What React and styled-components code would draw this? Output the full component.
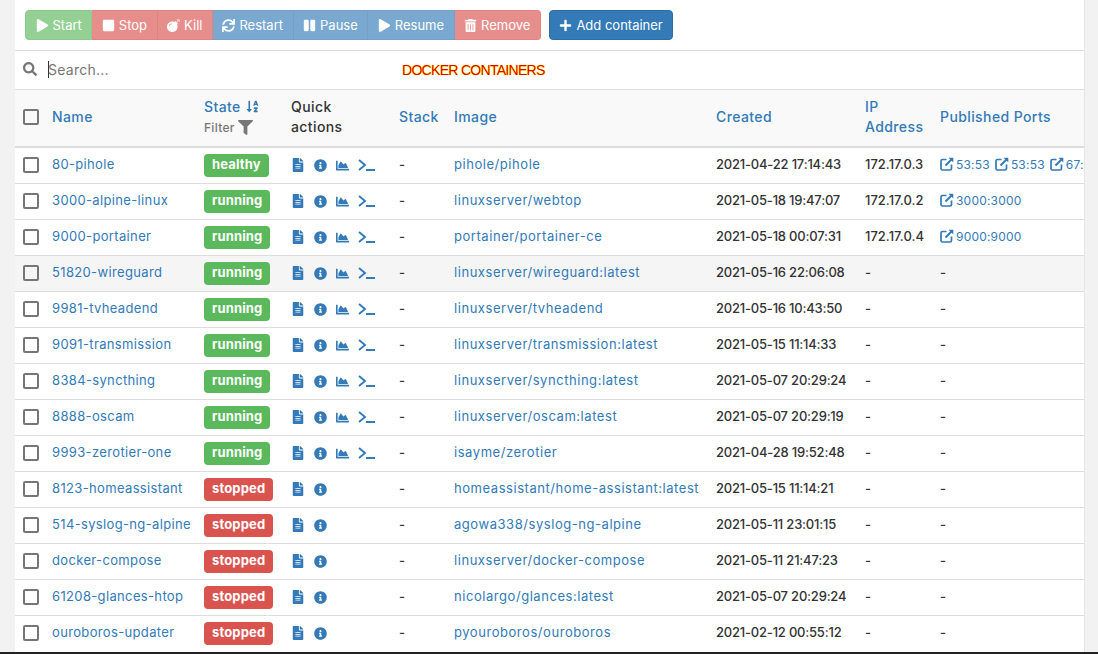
import { createGlobalStyle } from "styled-components";
import styled from "styled-components";
import {
  FaPlay,
  FaStop,
  FaBomb,
  FaSync,
  FaPause,
  FaTrashAlt,
  FaPlus,
  FaSearch,
  FaFilter,
  FaSortAlphaDown,
  FaFileAlt,
  FaInfoCircle,
  FaChartArea,
} from "react-icons/fa";

const GlobalStyle = createGlobalStyle`
  html, body {
    margin: 0;
    height: 654px;
    overflow: hidden;
    background: #f2f2f2;
    font-family: Inter, "Open Sans", sans-serif;
    color: #333;
  }
`;

const Frame = styled.div`
  height: 654px;
  box-sizing: border-box;
  border-bottom: 2px solid #222;
  overflow: hidden;
`;

const Page = styled.div`
  width: 1069px;
  height: 652px;
  margin-left: 15px;
  background: #fff;
  box-shadow: 1px 0 0 #e6e6e6;
  overflow: hidden;
`;

const Toolbar = styled.div`
  display: flex;
  align-items: center;
  gap: 8px;
  height: 50px;
  padding-left: 10px;
  border-bottom: 1px solid #ddd;
`;

const ButtonGroup = styled.div`
  display: flex;
`;

const ActionButton = styled.div`
  display: flex;
  align-items: center;
  gap: 4px;
  height: 30px;
  box-sizing: border-box;
  padding: 0 9.5px;
  font-size: 13px;
  color: #fff;
  white-space: nowrap;
  background: ${(p) => p.$bg};
  border: 1px solid ${(p) => p.$line};
  border-left-width: ${(p) => (p.$first ? 1 : 0)}px;
  border-radius: ${(p) => (p.$first ? "4px 0 0 4px" : p.$last ? "0 4px 4px 0" : "0")};
  opacity: ${(p) => (p.$faded ? 0.65 : 1)};

  svg {
    font-size: 13px;
  }
`;

const AddButton = styled(ActionButton)`
  border-radius: 4px;
  border-left-width: 1px;
`;

const SearchBar = styled.div`
  position: relative;
  display: flex;
  align-items: center;
  height: 39px;
  padding: 0 0 2px 8px;
  box-sizing: border-box;
  border-bottom: 1px solid #ddd;
  color: #767676;
  font-size: 14px;
  letter-spacing: 0.25px;

  svg {
    font-size: 14px;
    margin-right: 11px;
  }
`;

const Caret = styled.span`
  width: 1px;
  height: 17px;
  background: #333;
  margin-right: -1px;
`;

const Banner = styled.span`
  position: absolute;
  left: 387px;
  top: 11px;
  font-family: "Liberation Sans", sans-serif;
  font-size: 14px;
  letter-spacing: -0.7px;
  color: #e00000;
  text-shadow: 0 0 1px #ff0, 0 0 1px #ff0;
`;

const Table = styled.table`
  width: 1069px;
  table-layout: fixed;
  border-collapse: collapse;
  font-size: 13px;
`;

const Th = styled.th`
  height: 57px;
  box-sizing: border-box;
  padding: 0 0 2px ${(p) => p.$pad ?? 8}px;
  text-align: left;
  font-weight: 500;
  font-size: 14px;
  line-height: 20px;
  letter-spacing: 0.4px;
  color: ${(p) => (p.$plain ? "#333" : "#337ab7")};
  background: #f9f9f9;
  border-bottom: 2px solid #ddd;
`;

const FilterLabel = styled.div`
  display: flex;
  align-items: center;
  gap: 3px;
  margin-top: 1px;
  font-size: 12px;
  letter-spacing: 0.3px;
  color: #767676;

  svg {
    font-size: 15px;
  }
`;

const Row = styled.tr`
  height: 36px;
  background: ${(p) => (p.$hover ? "#f5f5f5" : "#fff")};
  border-bottom: 1px solid #ddd;

  &:last-child {
    border-bottom: none;
  }
`;

const Td = styled.td`
  box-sizing: border-box;
  padding: 0 0 ${(p) => (p.$text ? 2 : 0)}px ${(p) => p.$pad ?? 8}px;
  white-space: nowrap;
  overflow: hidden;
  color: ${(p) => (p.$link ? "#337ab7" : "#333")};
  font-weight: ${(p) => (p.$strong ? 500 : 400)};
  letter-spacing: ${(p) => p.$track || 0}px;
`;

const Box = styled.span`
  display: block;
  width: 16px;
  height: 16px;
  box-sizing: border-box;
  border: 2px solid #767676;
  border-radius: 2px;
`;

const Badge = styled.span`
  display: inline-block;
  height: 23px;
  line-height: 21px;
  padding: 0 8px;
  border-radius: 4px;
  color: #fff;
  font-weight: 700;
  font-size: 13px;
  letter-spacing: 0.15px;
  background: ${(p) => (p.$state === "stopped" ? "#d9534f" : "#5cb85c")};
`;

const Actions = styled.div`
  display: flex;
  align-items: center;
  gap: 9px;
  color: #337ab7;
  font-size: 13px;
`;

const FileIcon = styled(FaFileAlt)`
  font-size: 14px;
`;

const Ports = styled.div`
  display: flex;
  gap: 5px;
  font-size: 12px;
  letter-spacing: 0.2px;
  color: #337ab7;
`;

const Port = styled.span`
  display: flex;
  align-items: center;
  gap: 2px;
`;

const Sort = styled(FaSortAlphaDown)`
  font-size: 13px;
  vertical-align: -1px;
  margin-left: 1px;
`;

const containers = [
  ["80-pihole", "healthy", "pihole/pihole", "2021-04-22 17:14:43", "172.17.0.3", ["53:53", "53:53", "67:67"]],
  ["3000-alpine-linux", "running", "linuxserver/webtop", "2021-05-18 19:47:07", "172.17.0.2", ["3000:3000"]],
  ["9000-portainer", "running", "portainer/portainer-ce", "2021-05-18 00:07:31", "172.17.0.4", ["9000:9000"]],
  ["51820-wireguard", "running", "linuxserver/wireguard:latest", "2021-05-16 22:06:08", "-", []],
  ["9981-tvheadend", "running", "linuxserver/tvheadend", "2021-05-16 10:43:50", "-", []],
  ["9091-transmission", "running", "linuxserver/transmission:latest", "2021-05-15 11:14:33", "-", []],
  ["8384-syncthing", "running", "linuxserver/syncthing:latest", "2021-05-07 20:29:24", "-", []],
  ["8888-oscam", "running", "linuxserver/oscam:latest", "2021-05-07 20:29:19", "-", []],
  ["9993-zerotier-one", "running", "isayme/zerotier", "2021-04-28 19:52:48", "-", []],
  ["8123-homeassistant", "stopped", "homeassistant/home-assistant:latest", "2021-05-15 11:14:21", "-", []],
  ["514-syslog-ng-alpine", "stopped", "agowa338/syslog-ng-alpine", "2021-05-11 23:01:15", "-", []],
  ["docker-compose", "stopped", "linuxserver/docker-compose", "2021-05-11 21:47:23", "-", []],
  ["61208-glances-htop", "stopped", "nicolargo/glances:latest", "2021-05-07 20:29:24", "-", []],
  ["ouroboros-updater", "stopped", "pyouroboros/ouroboros", "2021-02-12 00:55:12", "-", []],
];

const buttons = [
  ["Start", FaPlay, "#5cb85c", "#4cae4c"],
  ["Stop", FaStop, "#d9534f", "#d43f3a"],
  ["Kill", FaBomb, "#d9534f", "#d43f3a"],
  ["Restart", FaSync, "#337ab7", "#2e6da4"],
  ["Pause", FaPause, "#337ab7", "#2e6da4"],
  ["Resume", FaPlay, "#337ab7", "#2e6da4"],
  ["Remove", FaTrashAlt, "#d9534f", "#d43f3a"],
];

function TerminalIcon() {
  return (
    <svg width="17" height="12" viewBox="0 0 17 12" fill="none">
      <path d="M1 1 L7 6 L1 11" stroke="#337ab7" strokeWidth="1.9" />
      <rect x="8" y="10" width="9" height="2" fill="#337ab7" />
    </svg>
  );
}

// box with an arrow out of its top right corner
function ExternalLinkIcon() {
  return (
    <svg width="14" height="14" viewBox="0 0 14 14" fill="none" stroke="#337ab7">
      <path d="M6.5 2.5 H2.5 Q1 2.5 1 4 V11.5 Q1 13 2.5 13 H10 Q11.5 13 11.5 11.5 V7.5" strokeWidth="1.7" />
      <path d="M5.5 8.5 L12 2" strokeWidth="2" />
      <path d="M8.5 0.8 H13.3 V5.6 Z" fill="#337ab7" strokeWidth="0" />
    </svg>
  );
}

export default function App() {
  return (
    <Frame>
      <GlobalStyle />
      <Page>
        <Toolbar>
          <ButtonGroup>
            {buttons.map(([label, Icon, bg, line], i) => (
              <ActionButton key={label} $bg={bg} $line={line} $faded $first={i === 0} $last={i === buttons.length - 1}>
                <Icon />
                {label}
              </ActionButton>
            ))}
          </ButtonGroup>
          <AddButton $bg="#337ab7" $line="#2e6da4">
            <FaPlus />
            Add container
          </AddButton>
        </Toolbar>
        <SearchBar>
          <FaSearch />
          <Caret />
          Search...
          <Banner>DOCKER CONTAINERS</Banner>
        </SearchBar>
        <Table>
          <colgroup>
            <col width="36" />
            <col width="153" />
            <col width="79" />
            <col width="108" />
            <col width="55" />
            <col width="262" />
            <col width="149" />
            <col width="75" />
            <col width="152" />
          </colgroup>
          <thead>
            <tr>
              <Th $pad={8}>
                <Box />
              </Th>
              <Th $pad={1}>Name</Th>
              <Th $pad={0}>
                State <Sort />
                <FilterLabel>
                  Filter <FaFilter />
                </FilterLabel>
              </Th>
              <Th $plain>
                Quick
                <br />
                actions
              </Th>
              <Th>Stack</Th>
              <Th>Image</Th>
              <Th>Created</Th>
              <Th>
                IP
                <br />
                Address
              </Th>
              <Th>Published Ports</Th>
            </tr>
          </thead>
          <tbody>
            {containers.map(([name, state, image, created, ip, ports]) => (
              <Row key={name} $hover={name === "51820-wireguard"}>
                <Td $pad={8}>
                  <Box />
                </Td>
                <Td $pad={1} $link $text $track={0.35}>
                  {name}
                </Td>
                <Td $pad={0}>
                  <Badge $state={state}>{state}</Badge>
                </Td>
                <Td>
                  <Actions>
                    <FileIcon />
                    <FaInfoCircle />
                    {state !== "stopped" && <FaChartArea />}
                    {state !== "stopped" && <TerminalIcon />}
                  </Actions>
                </Td>
                <Td $strong $text>
                  -
                </Td>
                <Td $link $text $track={0.55}>
                  {image}
                </Td>
                <Td $strong $text $track={-0.2}>
                  {created}
                </Td>
                <Td $strong $text>
                  {ip}
                </Td>
                <Td $strong={!ports.length} $text>
                  {ports.length ? (
                    <Ports>
                      {ports.map((port, i) => (
                        <Port key={i}>
                          <ExternalLinkIcon />
                          {port}
                        </Port>
                      ))}
                    </Ports>
                  ) : (
                    "-"
                  )}
                </Td>
              </Row>
            ))}
          </tbody>
        </Table>
      </Page>
    </Frame>
  );
}
